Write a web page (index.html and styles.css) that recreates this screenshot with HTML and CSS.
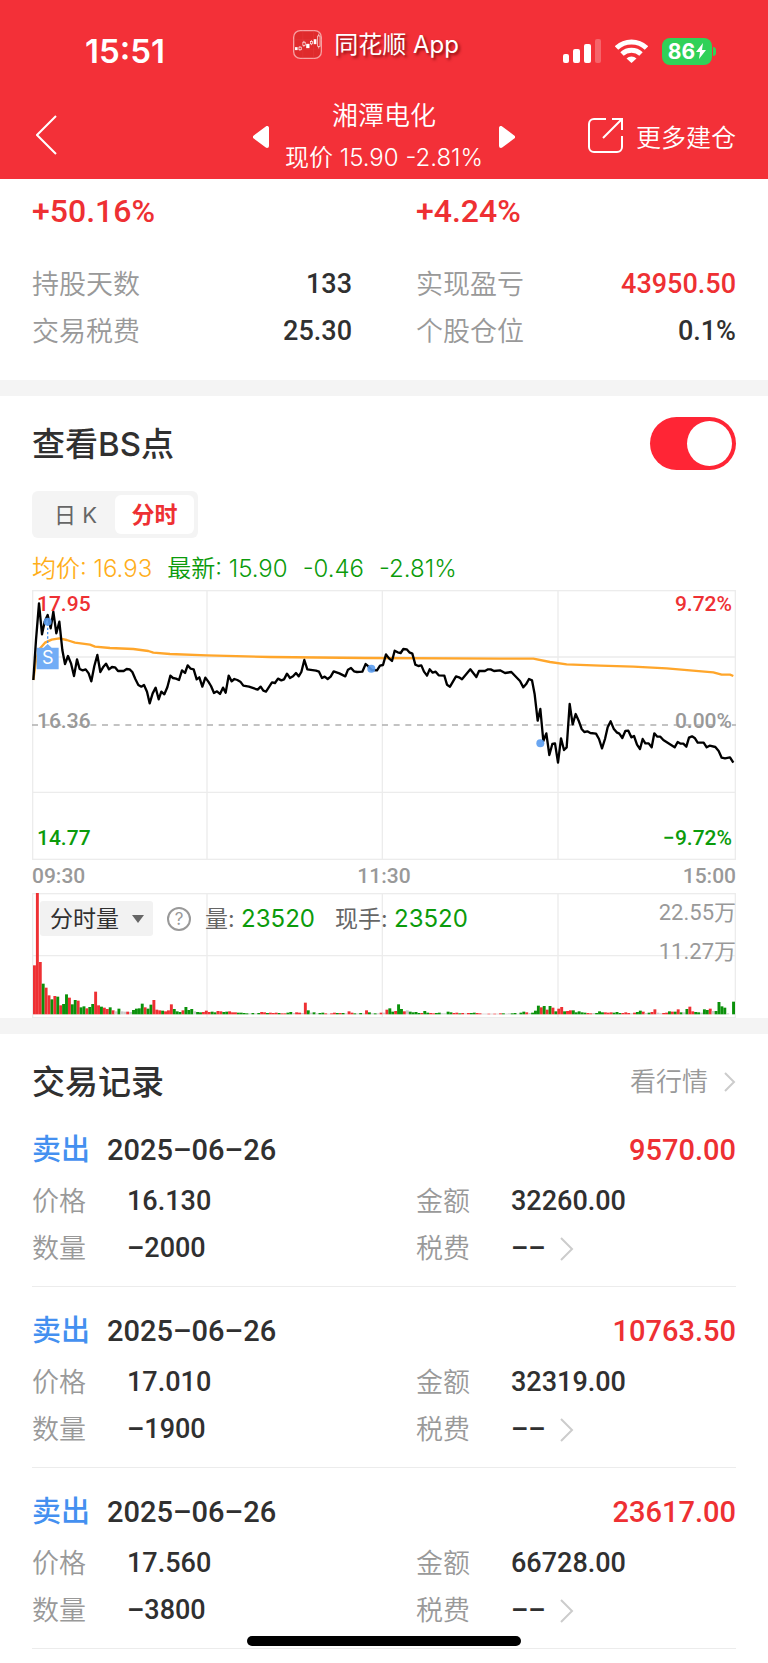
FILE: index.html
```html
<!DOCTYPE html>
<html lang="zh-CN">
<head>
    <meta charset="UTF-8">
    <meta name="viewport" content="width=device-width, initial-scale=1.0">
    <title>湘潭电化</title>
    <link rel="stylesheet" href="styles.css">
</head>
<body>

<header class="header">
    <div class="status-bar">
        <span class="clock">15:51</span>
        <span class="brand">
            <svg class="brand-icon" viewBox="0 0 88 88">
                <rect x="2" y="2" width="84" height="84" rx="20" fill="#df2a2c" stroke="#f8a0a2" stroke-width="4"/>
                <path d="M2 30H86M2 58H86M30 2V86M62 2V86" stroke="#e84548" stroke-width="1"/>
                <g fill="#fff"><rect x="6" y="52" width="8" height="9"/><rect x="40" y="42" width="10" height="13"/><rect x="63" y="28" width="8" height="15"/></g>
                <g fill="none" stroke="#fff" stroke-width="2"><path d="M21 49V63M33 33V51M56 31V46M78 11V56"/><rect x="18" y="52" width="7" height="8" fill="#df2a2c"/><rect x="30" y="37" width="7" height="10" fill="#df2a2c"/><rect x="53" y="35" width="6" height="7" fill="#df2a2c"/><rect x="75" y="18" width="7" height="32" fill="#df2a2c"/></g>
            </svg>
            <span class="brand-name">同花顺 App</span>
        </span>
        <span class="status-icons">
            <svg class="signal" viewBox="0 0 38 24">
                <rect x="0" y="15" width="6" height="9" rx="2" fill="#fff"/>
                <rect x="10" y="10" width="7" height="14" rx="2" fill="#fff"/>
                <rect x="21" y="5" width="7" height="19" rx="2" fill="#fff"/>
                <rect x="32" y="0" width="6" height="24" rx="2" fill="#fff" fill-opacity=".25"/>
            </svg>
            <svg class="wifi" viewBox="0 0 33 24" fill="none" stroke="#fff" stroke-width="5">
                <path d="M1.500 9a21.500 21.500 0 0 1 30 0"/>
                <path d="M7 15a14 14 0 0 1 19 0"/>
                <path d="M11.500 19.500a7 7 0 0 1 10 0L16.500 24z" fill="#fff" stroke="none"/>
            </svg>
            <span class="battery">86<svg class="bolt" viewBox="0 0 10 16"><path d="M7 0L0 9h4L3 16l7-9H6z" fill="#fff"/></svg></span>
        </span>
    </div>
    <nav class="nav">
        <button class="icon-btn back" type="button" aria-label="返回">
            <svg width="22" height="40" viewBox="0 0 22 40" fill="none" stroke="#fff" stroke-width="2"><path d="M20 1L1 20l19 19"/></svg>
        </button>
        <div class="stock">
            <button class="icon-btn" type="button" aria-label="上一只">
                <svg width="16" height="22" viewBox="0 0 16 22"><path d="M14 2v18L2 11z" fill="#fff" stroke="#fff" stroke-width="4" stroke-linejoin="round"/></svg>
            </button>
            <div class="stock-text">
                <h1>湘潭电化</h1>
                <p>现价 15.90 -2.81%</p>
            </div>
            <button class="icon-btn" type="button" aria-label="下一只">
                <svg width="16" height="22" viewBox="0 0 16 22"><path d="M2 2v18l12-9z" fill="#fff" stroke="#fff" stroke-width="4" stroke-linejoin="round"/></svg>
            </button>
        </div>
        <a class="more" href="#">
            <svg width="36" height="36" viewBox="0 0 36 36" fill="none" stroke="#fff" stroke-width="2"><path d="M18 1H6a5 5 0 0 0-5 5v23a5 5 0 0 0 5 5h23a5 5 0 0 0 5-5V18"/><path d="M24 1h10v11M34 1L15 20"/></svg>
            更多建仓
        </a>
    </nav>
</header>

<main>
    <section class="panel summary">
        <div class="rates">
            <span>+50.16%</span>
            <span>+4.24%</span>
        </div>
        <dl class="facts">
            <div><dt>持股天数</dt><dd>133</dd></div>
            <div><dt>实现盈亏</dt><dd class="up">43950.50</dd></div>
            <div><dt>交易税费</dt><dd>25.30</dd></div>
            <div><dt>个股仓位</dt><dd>0.1%</dd></div>
        </dl>
    </section>

    <section class="panel chart-panel">
        <div class="chart-head">
            <h2><label for="bs-switch">查看BS点</label></h2>
            <input class="switch" type="checkbox" id="bs-switch" checked>
        </div>
        <div class="tabs">
            <button type="button">日 K</button>
            <button type="button" class="active">分时</button>
        </div>
        <p class="legend"><span class="avg">均价: 16.93</span><span>最新: 15.90</span><span class="change">-0.46</span><span class="change">-2.81%</span></p>

        <div class="chart">
            <svg viewBox="0 0 2112 810">
                <g fill="none" stroke="#ececec" stroke-width="4">
                    <rect x="2" y="2" width="2108" height="806"/>
                    <path d="M525 0V810M1051 0V810M1578 0V810M0 201H2112M0 607H2112"/>
                </g>
                <path d="M0 405H2112" stroke="#b0b0b0" stroke-width="5" stroke-dasharray="18 17"/>
                <polyline class="avg-line" points="4,270 12,210 22,178 39,158 59,149 82,145 104,150 129,158 174,164 189,170 234,174 304,177 349,183 364,188 414,192 524,196 714,201 1000,204 1404,206 1504,206 1554,216 1604,223 1704,227 1804,230 1904,235 1974,241 2044,247 2069,254 2094,254 2104,258"/>
                <path d="M47 162l12 11h21v65H14v-65h21z" fill="#72adf6"/>
                <text x="47" y="223" class="badge-text">S</text>
                <path d="M47 100V165" stroke="#4b92ee" stroke-width="4" stroke-dasharray="7 6"/>
                <polyline class="price-line" points="4,270 12,150 21,40 30,133 38,95 47,75 56,115 64,65 73,130 82,95 91,180 99,222 108,198 117,220 126,258 135,208 143,237 152,241 161,238 170,250 178,274 187,228 196,195 205,246 213,232 222,221 231,238 240,231 249,232 258,243 275,243 284,237 293,238 301,246 310,267 319,285 328,290 336,285 345,305 353,340 362,310 371,293 380,328 388,305 397,313 406,292 415,257 423,264 432,266 441,270 450,241 459,249 467,226 476,236 485,238 494,268 502,262 511,290 520,263 529,275 537,288 546,309 555,304 564,312 573,293 581,308 590,257 599,274 607,267 616,270 625,275 634,287 651,290 677,299 686,290 694,302
                    702,305 720,277 729,279 738,266 748,271 756,268 765,251 774,264 783,259 792,249 800,259 808,246 817,210 826,238 852,242 861,245 870,264 878,260 887,267 896,260 905,244 922,250 940,259 948,239 957,234 966,244 975,246 991,245 1001,222 1010,230 1019,240 1035,241 1044,227 1053,225 1062,193 1071,205 1080,213 1088,182 1097,187 1106,189 1114,177 1124,178 1132,187 1141,191 1150,224 1159,228 1168,226 1176,245 1185,257 1193,238 1202,248 1211,245 1220,256 1237,257 1245,284 1254,290 1272,259 1281,262 1290,268 1315,238 1333,261 1341,243 1359,243 1368,238 1376,238 1386,243
                    1404,241 1419,249 1438,246 1464,273 1474,292 1482,283 1491,267 1500,271 1508,313 1517,392 1525,357 1534,453 1543,430 1552,495 1561,462 1569,460 1578,518 1587,445 1596,480 1604,472 1613,342 1622,403 1631,372 1640,392 1649,417 1657,426 1666,424 1675,429 1692,431 1701,447 1710,475 1719,447 1727,412 1736,394 1745,416 1754,427 1762,431 1771,444 1780,423 1789,422 1798,442 1806,438 1815,464 1824,477 1832,447 1840,460 1850,460 1859,472 1867,430 1876,440 1885,440 1894,450 1928,472 1937,456 1946,461 1954,461 1963,470 1971,443 1980,439 1989,445 1997,458 2015,458 2024,472 2033,467 2050,471 2060,483 2069,503 2079,505 2094,502 2104,518"/>
                <g fill="#5a9cf0" fill-opacity=".9"><circle cx="47" cy="95" r="12"/><circle cx="1018" cy="236" r="12"/><circle cx="1525" cy="460" r="12"/></g>
            </svg>
            <div class="scale">
                <div class="up"><span>17.95</span><span>9.72%</span></div>
                <div class="flat"><span>16.36</span><span>0.00%</span></div>
                <div class="down"><span>14.77</span><span>−9.72%</span></div>
            </div>
        </div>
        <div class="times"><span>09:30</span><span>11:30</span><span>15:00</span></div>

        <div class="chart">
            <svg viewBox="0 0 2112 375">
                <g fill="none" stroke="#ececec" stroke-width="4">
                    <rect x="2" y="2" width="2108" height="372"/>
                    <path d="M525 0V375M1051 0V375M1578 0V375M0 188H2112"/>
                </g>
                <g id="volume-bars"></g>
            </svg>
            <div class="volume-tools">
                <span class="picker">
                    <select aria-label="指标"><option>分时量</option></select>
                    <svg width="14" height="10" viewBox="0 0 14 10"><path d="M1 1h12L7 9z" fill="#666"/></svg>
                </span>
                <button class="help" type="button">?</button>
                <span class="reading">量: <b>23520</b></span>
                <span class="reading">现手: <b>23520</b></span>
            </div>
            <div class="volume-scale"><span>22.55万</span><span>11.27万</span></div>
        </div>
    </section>

    <section class="panel records">
        <div class="records-head">
            <h2>交易记录</h2>
            <a href="#">看行情 <svg width="12" height="20" viewBox="0 0 12 20" fill="none" stroke="#ccc" stroke-width="2"><path d="M1 1l9 9-9 9"/></svg></a>
        </div>

        <article class="record">
            <div class="record-head"><span class="side">卖出</span><time>2025–06–26</time><span class="profit">9570.00</span></div>
            <dl>
                <div><dt>价格</dt><dd>16.130</dd></div>
                <div><dt>金额</dt><dd>32260.00</dd></div>
                <div><dt>数量</dt><dd>–2000</dd></div>
                <div><dt>税费</dt><dd>––<svg class="go" viewBox="0 0 14 24"><path d="M1 1l11 11L1 23"/></svg></dd></div>
            </dl>
        </article>

        <article class="record">
            <div class="record-head"><span class="side">卖出</span><time>2025–06–26</time><span class="profit">10763.50</span></div>
            <dl>
                <div><dt>价格</dt><dd>17.010</dd></div>
                <div><dt>金额</dt><dd>32319.00</dd></div>
                <div><dt>数量</dt><dd>–1900</dd></div>
                <div><dt>税费</dt><dd>––<svg class="go" viewBox="0 0 14 24"><path d="M1 1l11 11L1 23"/></svg></dd></div>
            </dl>
        </article>

        <article class="record">
            <div class="record-head"><span class="side">卖出</span><time>2025–06–26</time><span class="profit">23617.00</span></div>
            <dl>
                <div><dt>价格</dt><dd>17.560</dd></div>
                <div><dt>金额</dt><dd>66728.00</dd></div>
                <div><dt>数量</dt><dd>–3800</dd></div>
                <div><dt>税费</dt><dd>––<svg class="go" viewBox="0 0 14 24"><path d="M1 1l11 11L1 23"/></svg></dd></div>
            </dl>
        </article>
    </section>
</main>

<div class="home-bar"></div>

<script src="volume.js"></script>
</body>
</html>
```
FILE: volume.js
```js
// One bar per minute: r = up, g = down, n = unchanged
const volume = `
r147 r364 r157 g92 r80 r57 g45 r55 g53 r27 g31 g60 r50 g30 g43 r41 g21 g24 r18 g22
g31 r68 r27 g23 r20 r16 g21 r12 n9 g17 n9 n8 r8 n7 g13 g17 g18 g32 r21 g17
g29 r43 r14 r12 g11 r9 r12 r30 g16 g9 g7 r12 g22 g13 g16 n9 g7 g6 r7 r11
r7 g8 g6 r10 r9 g7 g8 r9 r6 r6 g5 g5 g4 g3 n3 g4 n3 g4 r7 r6
g4 r5 r4 r5 g4 r3 r3 g5 g7 n4 r6 r5 n4 r35 g12 n5 g6 n3 g4 g5
r3 n2 r3 r5 g4 r4 g4 n3 r9 r5 g3 n3 g4 n3 r12 g6 n3 g3 n3 r5
n5 r14 g18 g8 r10 g30 g16 r9 n12 g8 g6 g7 g4 r4 g10 g5 r4 r3 g4 g5
n3 n3 g8 g6 r4 r5 g3 r4 n3 r4 g4 g5 r4 r3 n2 n2 r2 n2 r2 n2
r3 g3 n2 n3 g3 g4 n2 g5 g8 r6 n4 g5 g11 g26 r21 g25 r14 g25 r20 g9
r17 r22 g9 r10 r12 g12 g6 g9 g6 g5 r4 r3 n4 g4 g9 g6 r6 r5 r6 g5
g7 g4 r4 r6 r4 n3 r5 g7 g11 r8 n4 g5 r7 r15 n5 n3 r4 r5 g9 r8
g8 r15 g6 n6 g16 r23 r9 g7 g6 n5 g15 g13 r17 n10 g10 g37 g24 g20 n3 n0 g38
`.trim().split(/\s+/);

const colors = { r: '#ee3033', g: '#0b910b', n: '#c8c8c8' };
const step = 2106 / volume.length;

document.getElementById('volume-bars').innerHTML = volume.map((bar, i) => {
    const height = Number(bar.slice(1));
    return `<rect x="${3 + i * step}" y="${364 - height}" width="${step}" height="${height}" fill="${colors[bar[0]]}"/>`;
}).join('');
```
FILE: styles.css
```css
* {
    box-sizing: border-box;
}

body {
    margin: 0;
    background-color: #fff;
    color: #303030;
    font-family: Inter, "Noto Sans CJK SC", sans-serif;
}

h1, h2, p, dl, dd {
    margin: 0;
    font-weight: 400;
}

button, select {
    border: none;
    background: none;
    padding: 0;
    font-family: inherit;
    cursor: pointer;
}

a {
    text-decoration: none;
}

svg {
    display: block;
}

/* header */

.header {
    background-color: #f33038;
    color: #fff;
}

.status-bar {
    display: grid;
    grid-template-columns: 1fr auto 1fr;
    height: 95px;
}

.clock {
    padding: 31px 0 0 85px;
    font-size: 33px;
    line-height: 40px;
    font-weight: 600;
}

.brand {
    display: flex;
    align-items: center;
    gap: 12px;
    height: 88px;
    margin-right: 16px;
    font-size: 24px;
    text-shadow: 2px 2px 3px rgba(90, 0, 0, 0.7);
}

.brand-name {
    padding-bottom: 3px;
}

.brand-icon {
    width: 29px;
    height: 29px;
}

.status-icons {
    display: flex;
    align-items: center;
    justify-content: flex-end;
    gap: 14px;
    height: 102px;
    padding-right: 56px;
}

.signal {
    width: 38px;
    height: 24px;
}

.wifi {
    width: 33px;
    height: 24px;
}

.battery {
    position: relative;
    display: flex;
    align-items: center;
    justify-content: center;
    gap: 1px;
    width: 50px;
    height: 27px;
    border-radius: 8px;
    background-color: #30d158;
    font-size: 21px;
    font-weight: 700;
}

.battery::after {
    content: "";
    position: absolute;
    right: -4px;
    top: 9px;
    width: 3px;
    height: 9px;
    border-radius: 0 4px 4px 0;
    background-color: #30d158;
}

.bolt {
    width: 10px;
    height: 16px;
}

.nav {
    display: grid;
    grid-template-columns: 1fr auto 1fr;
    align-items: center;
    height: 84px;
    padding: 0 32px;
}

.back {
    justify-self: start;
    padding: 0 0 4px 4px;
}

.stock {
    display: flex;
    align-items: center;
    gap: 16px;
    text-align: center;
}

.stock-text {
    line-height: 42px;
}

.stock h1 {
    font-size: 26px;
    font-weight: 350;
}

.stock p {
    font-size: 24px;
    font-weight: 350;
}

.more {
    display: flex;
    align-items: center;
    justify-self: end;
    gap: 12px;
    padding-bottom: 3px;
    color: #fff;
    font-size: 25px;
    font-weight: 350;
}

/* shared */

.panel {
    padding: 0 32px;
}

.panel + .panel {
    border-top: 16px solid #f4f4f4;
}

.panel h2 {
    font-size: 33px;
    font-weight: 500;
}

.up {
    color: #ee3033;
}

.flat {
    color: #999;
}

.down {
    color: #0b9b0b;
}

.rates,
.panel dl {
    display: grid;
    grid-template-columns: 1fr 1fr;
    column-gap: 64px;
}

.panel dl {
    line-height: 47px;
}

.panel dl div {
    display: flex;
}

.panel dt {
    color: #999;
    font-size: 27px;
    font-weight: 350;
}

.panel dd {
    font: 500 27px/47px Roboto, sans-serif;
}

/* summary */

.summary {
    padding-top: 10px;
    padding-bottom: 25px;
}

.rates {
    margin-bottom: 28px;
    color: #ee3033;
    font: 500 32px/44px Roboto, sans-serif;
}

.facts div {
    justify-content: space-between;
}

/* charts */

.chart-panel {
    padding-top: 21px;
}

.chart-head {
    display: flex;
    align-items: center;
    justify-content: space-between;
}

.chart-head h2 {
    padding-bottom: 4px;
}

.switch {
    appearance: none;
    width: 86px;
    height: 53px;
    margin: 0;
    padding: 4px;
    border-radius: 27px;
    background-color: #ccc;
    cursor: pointer;
}

.switch::before {
    content: "";
    display: block;
    width: 45px;
    height: 45px;
    border-radius: 50%;
    background-color: #fff;
}

.switch:checked {
    background-color: #ff2535;
}

.switch:checked::before {
    margin-left: auto;
}

.tabs {
    display: inline-flex;
    height: 47px;
    margin-top: 21px;
    padding: 4px;
    border-radius: 6px;
    background-color: #f4f4f4;
    vertical-align: top;
}

.tabs button {
    width: 79px;
    padding-bottom: 4px;
    border-radius: 6px;
    color: #666;
    font-size: 22px;
}

.tabs .active {
    background-color: #fff;
    color: #ee3033;
    font-size: 23px;
    font-weight: 700;
}

.legend {
    display: flex;
    gap: 15px;
    margin: 14px 0 4px;
    color: #0b9b0b;
    font-size: 24px;
    font-weight: 350;
    line-height: 34px;
}

.legend .avg {
    color: #ffae1a;
}

.chart {
    position: relative;
}

.chart svg {
    width: 100%;
}

.avg-line,
.price-line {
    fill: none;
    stroke: #ffa62b;
    stroke-width: 7;
    stroke-linejoin: round;
}

.price-line {
    stroke: #000;
}

.badge-text {
    fill: #fff;
    font-size: 54px;
    text-anchor: middle;
}

.scale {
    position: absolute;
    inset: 0;
    display: flex;
    flex-direction: column;
    justify-content: space-between;
    padding: 2px 4px 10px 5px;
    font: 500 21px/24px Roboto, sans-serif;
}

.scale div,
.times {
    display: flex;
    justify-content: space-between;
}

.times {
    color: #999;
    font: 500 21px/33px Roboto, sans-serif;
}

.volume-tools {
    position: absolute;
    top: 7px;
    left: 8px;
    display: flex;
    align-items: center;
    gap: 14px;
    color: #666;
    font-size: 23px;
}

.volume-tools b {
    color: #0b9b0b;
    font-size: 24px;
    font-weight: 400;
}

.reading {
    padding-bottom: 3px;
}

.reading + .reading {
    margin-left: 6px;
}

.picker {
    position: relative;
}

.picker select {
    appearance: none;
    width: 113px;
    height: 35px;
    padding-left: 10px;
    border-radius: 3px;
    background-color: #f2f2f2;
    color: #303030;
    font-size: 23px;
}

.picker svg {
    position: absolute;
    right: 8px;
    top: 13px;
    width: 14px;
    pointer-events: none;
}

.help {
    width: 24px;
    height: 24px;
    border: 2px solid #999;
    border-radius: 50%;
    color: #999;
    font-size: 17px;
    line-height: 20px;
}

.volume-scale {
    position: absolute;
    top: 0;
    right: 0;
    display: grid;
    color: #999;
    text-align: right;
    font: 400 22px/39px Roboto, "Noto Sans CJK SC", sans-serif;
}

/* records */

.records-head {
    display: flex;
    align-items: center;
    justify-content: space-between;
    padding-top: 24px;
    line-height: 48px;
}

.records-head a {
    display: flex;
    align-items: center;
    gap: 16px;
    color: #999;
    font-size: 26px;
    font-weight: 350;
}

.record {
    padding: 22px 0 14px;
    border-bottom: 1px solid #ececec;
}

.record-head {
    display: flex;
    margin-bottom: 6px;
    font: 500 29px/44px Roboto, "Noto Sans CJK SC", sans-serif;
}

.side {
    margin-right: 17px;
    color: #4490f0;
}

.profit {
    margin-left: auto;
    color: #ee3033;
}

.record dt {
    width: 95px;
}

.record dd {
    display: flex;
    align-items: center;
}

.go {
    width: 14px;
    height: 24px;
    margin-left: 14px;
    fill: none;
    stroke: #ccc;
    stroke-width: 2;
}

.home-bar {
    position: fixed;
    bottom: 17px;
    left: 50%;
    width: 274px;
    height: 10px;
    border-radius: 5px;
    background-color: #000;
    transform: translateX(-50%);
}
```
